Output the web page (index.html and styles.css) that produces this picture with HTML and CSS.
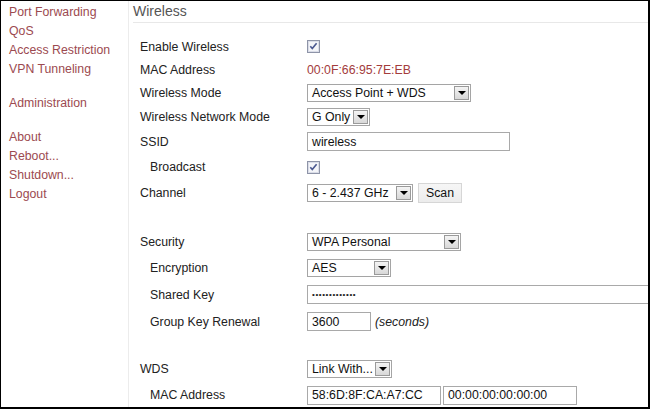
FILE: index.html
```html
<!DOCTYPE html>
<html>
<head>
<meta charset="utf-8">
<link rel="stylesheet" href="styles.css">
</head>
<body>
<div class="frame">
  <nav class="sidebar">
    <div class="group">
      <a>Port Forwarding</a>
      <a>QoS</a>
      <a>Access Restriction</a>
      <a>VPN Tunneling</a>
    </div>
    <div class="group">
      <a>Administration</a>
    </div>
    <div class="group">
      <a>About</a>
      <a>Reboot...</a>
      <a>Shutdown...</a>
      <a>Logout</a>
    </div>
  </nav>
  <main class="main">
    <h1 class="title">Wireless</h1>
    <div class="form">
      <div class="row h23">
        <div class="label">Enable Wireless</div>
        <div class="value"><span class="check"><svg width="13" height="13" viewBox="0 0 13 13"><rect x="0.5" y="0.5" width="12" height="12" fill="#eef0f6" stroke="#8e94a8"/><rect x="1.5" y="1.5" width="10" height="10" fill="#f4f5f9" stroke="#dadde8"/><path d="M3.3 6.2 L5.3 8.6 L9.6 3.2" fill="none" stroke="#4a5890" stroke-width="1.6"/></svg></span></div>
      </div>
      <div class="row h23">
        <div class="label">MAC Address</div>
        <div class="value mac">00:0F:66:95:7E:EB</div>
      </div>
      <div class="row h23">
        <div class="label">Wireless Mode</div>
        <div class="value"><span class="select w164"><span class="stext">Access Point + WDS</span><span class="arrow"></span></span></div>
      </div>
      <div class="row h25">
        <div class="label">Wireless Network Mode</div>
        <div class="value"><span class="select w63"><span class="stext">G Only</span><span class="arrow"></span></span></div>
      </div>
      <div class="row h25">
        <div class="label">SSID</div>
        <div class="value"><span class="input w203">wireless</span></div>
      </div>
      <div class="row h26">
        <div class="label sub">Broadcast</div>
        <div class="value"><span class="check"><svg width="13" height="13" viewBox="0 0 13 13"><rect x="0.5" y="0.5" width="12" height="12" fill="#eef0f6" stroke="#8e94a8"/><rect x="1.5" y="1.5" width="10" height="10" fill="#f4f5f9" stroke="#dadde8"/><path d="M3.3 6.2 L5.3 8.6 L9.6 3.2" fill="none" stroke="#4a5890" stroke-width="1.6"/></svg></span></div>
      </div>
      <div class="row h26">
        <div class="label">Channel</div>
        <div class="value"><span class="select w106"><span class="stext">6 - 2.437 GHz</span><span class="arrow"></span></span><span class="button">Scan</span></div>
      </div>
      <div class="spacer s23"></div>
      <div class="row h26">
        <div class="label">Security</div>
        <div class="value"><span class="select w154"><span class="stext">WPA Personal</span><span class="arrow"></span></span></div>
      </div>
      <div class="row h26">
        <div class="label sub">Encryption</div>
        <div class="value"><span class="select w84"><span class="stext">AES</span><span class="arrow"></span></span></div>
      </div>
      <div class="row h27">
        <div class="label sub">Shared Key</div>
        <div class="value"><span class="input wide"><span class="dots">•••••••••••••</span></span></div>
      </div>
      <div class="row h27">
        <div class="label sub">Group Key Renewal</div>
        <div class="value"><span class="input w64">3600</span><span class="note">(seconds)</span></div>
      </div>
      <div class="spacer s21"></div>
      <div class="row h26">
        <div class="label">WDS</div>
        <div class="value"><span class="select w85"><span class="stext">Link With...</span><span class="arrow"></span></span></div>
      </div>
      <div class="row h26">
        <div class="label sub">MAC Address</div>
        <div class="value"><span class="input w134">58:6D:8F:CA:A7:CC</span><span class="input w134 gap2">00:00:00:00:00:00</span></div>
      </div>
    </div>
  </main>
</div>
</body>
</html>
```
FILE: styles.css
```css
* { box-sizing: border-box; }
html, body { margin: 0; padding: 0; background: #fff; }
body {
  font-family: "Liberation Sans", Arial, sans-serif;
  font-size: 12.3px;
  color: #222;
}
.frame {
  width: 650px;
  height: 409px;
  border-top: 1px solid #000;
  border-left: 1px solid #000;
  border-right: 2px solid #000;
  border-bottom: 2px solid #000;
  display: flex;
  overflow: hidden;
}
.sidebar {
  width: 128px;
  flex: none;
  border-right: 1px solid #ececec;
  padding: 2px 0 0 8px;
  display: flex;
  flex-direction: column;
  gap: 15px;
}
.group { display: flex; flex-direction: column; }
.group a {
  display: block;
  line-height: 19px;
  color: #9c4a50;
  white-space: nowrap;
}
.main {
  flex: 1;
  padding-left: 4px;
  min-width: 0;
}
.title {
  margin: 0;
  font-size: 14px;
  font-weight: normal;
  color: #555;
  line-height: 20px;
  height: 22px;
  border-bottom: 1px solid #e8e8e8;
}
.form { padding: 12px 0 0 7px; }
.row { display: flex; align-items: center; }
.h23 { height: 23px; }
.h25 { height: 25px; }
.h26 { height: 26px; }
.h27 { height: 27px; }
.spacer.s23 { height: 23px; }
.spacer.s21 { height: 21px; }
.label {
  width: 167px;
  flex: none;
  white-space: nowrap;
  color: #222;
}
.label.sub { padding-left: 10px; }
.value { display: flex; align-items: center; white-space: nowrap; }
.mac { color: #a33c3c; }
.check { display: inline-flex; width: 13px; height: 13px; }
.select {
  display: inline-flex;
  align-items: center;
  height: 18px;
  border: 1px solid #a5a5a5;
  background: #fff;
  padding: 0 1px 0 4px;
  justify-content: space-between;
}
.stext { color: #111; }
.arrow {
  width: 15px;
  height: 14px;
  border: 1px solid #9a9a9a;
  background: linear-gradient(#f4f4f4, #d8d8d8);
  position: relative;
  flex: none;
}
.arrow::after {
  content: "";
  position: absolute;
  left: 3px;
  top: 4px;
  border-left: 4px solid transparent;
  border-right: 4px solid transparent;
  border-top: 4px solid #000;
}
.w164 { width: 164px; }
.w63 { width: 63px; }
.w106 { width: 106px; }
.w154 { width: 154px; }
.w84 { width: 84px; }
.w85 { width: 85px; }
.input {
  display: inline-flex;
  align-items: center;
  height: 19px;
  border: 1px solid #a9a9a9;
  padding: 0 4px;
  color: #111;
  background: #fff;
}
.w203 { width: 203px; }
.w64 { width: 64px; }
.w134 { width: 134px; }
.wide { width: 360px; }
.gap2 { margin-left: 2px; }
.dots { font-size: 8px; letter-spacing: 0.6px; color: #222; }
.button {
  display: inline-flex;
  align-items: center;
  justify-content: center;
  width: 44px;
  height: 20px;
  margin-left: 5px;
  border: 1px solid #d6d6d6;
  background: linear-gradient(#f6f6f6, #ececec);
  color: #111;
}
.note { font-style: italic; margin-left: 4px; color: #222; }
```
